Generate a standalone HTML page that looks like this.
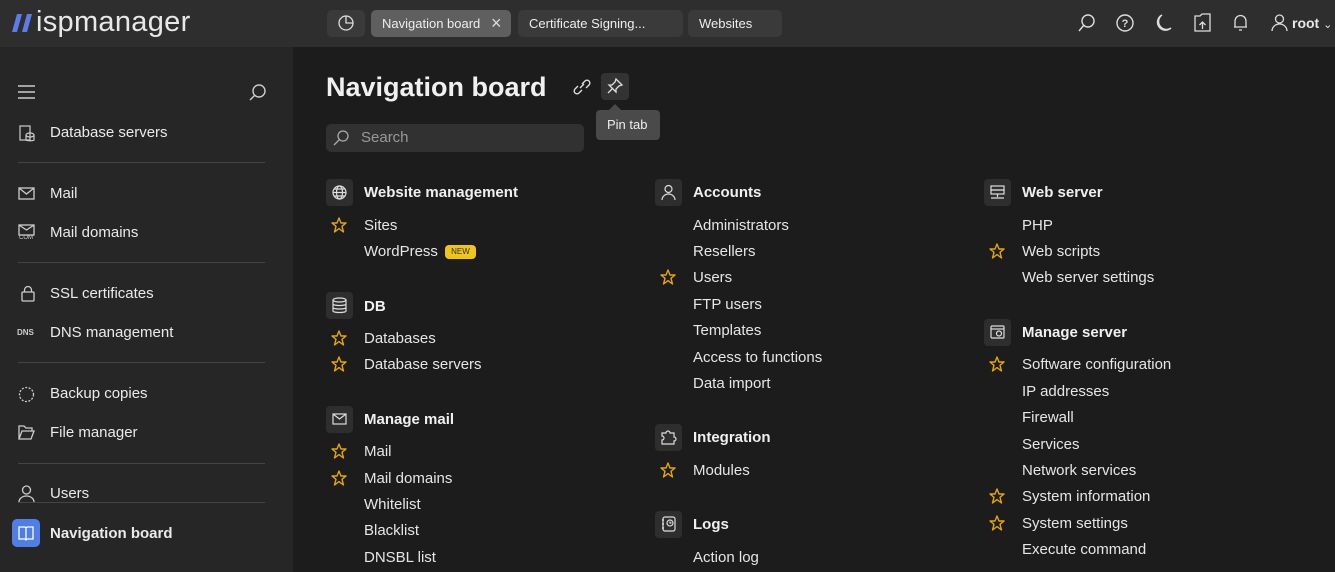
<!DOCTYPE html>
<html><head><meta charset="utf-8"><style>
*{margin:0;padding:0;box-sizing:border-box}
body{width:1335px;height:572px;overflow:hidden;background:#1c1c1c;font-family:"Liberation Sans",sans-serif;color:#e8e8e8;position:relative}
.a{position:absolute;line-height:20px;white-space:nowrap}
.hdr{position:absolute;left:0;top:0;width:1335px;height:47px;background:#2e2e2e}
.side{position:absolute;left:0;top:47px;width:293px;height:525px;background:#262626}
.tab{position:absolute;top:10px;height:27px;border-radius:5px;background:#3a3a3a;font-size:13px;line-height:27px;padding-left:11px;color:#eee}
.si{font-size:15px;color:#eaeaea}
.hr{position:absolute;left:18px;width:247px;height:1px;background:#444}
.it{font-size:15px;color:#e6e6e6}
.h{font-size:15px;font-weight:bold;color:#f0f0f0}
.box{position:absolute;width:27px;height:27px;border-radius:4px;background:#2e2e2e}
svg{position:absolute;overflow:visible}
.st{fill:none;stroke:#e5a50a;stroke-width:1.4;stroke-linejoin:round}
</style></head><body>
<div class="hdr"></div>
<svg style="left:12px;top:14px" width="22" height="18"><path d="M5 0H10L5 18H0ZM15 0H20L15 18H10Z" fill="#5b7de8"/></svg>
<div class="a" style="left:36px;top:6px;font-size:29px;line-height:32px;color:#e8e8e8;letter-spacing:0.3px">ispmanager</div>
<div class="tab" style="left:327px;width:38px;padding:0"></div>
<svg style="left:338px;top:15px" width="16" height="16"><circle cx="8" cy="8" r="7" fill="none" stroke="#ddd" stroke-width="1.3"/><path d="M8 1V8H15" fill="none" stroke="#ddd" stroke-width="1.3"/></svg>
<div class="tab" style="left:371px;width:140px;background:#5f5f5f">Navigation board</div>
<div class="a" style="left:491px;top:13px;font-size:18px;color:#ddd">×</div>
<div class="tab" style="left:518px;width:165px">Certificate Signing...</div>
<div class="tab" style="left:688px;width:94px">Websites</div>
<svg style="left:1078px;top:14px" width="18" height="18" fill="none" stroke="#ddd" stroke-width="1.4"><circle cx="10" cy="7" r="6"/><path d="M6 11L1 17"/></svg>
<svg style="left:1116px;top:14px" width="18" height="18" fill="none" stroke="#ddd" stroke-width="1.4"><circle cx="9" cy="9" r="8"/><text x="9" y="13" font-size="11" font-weight="bold" fill="#ddd" stroke="none" text-anchor="middle" font-family="Liberation Sans">?</text></svg>
<svg style="left:1156px;top:14px" width="16" height="18" fill="none" stroke="#ddd" stroke-width="1.4"><path d="M6 1A8 8 0 1 0 15 14A7 7 0 0 1 6 1Z"/></svg>
<svg style="left:1194px;top:13px" width="17" height="19" fill="none" stroke="#ddd" stroke-width="1.3"><path d="M1 3H6L8 1H16V18H1Z"/><path d="M8.5 16V9M5.5 12L8.5 9L11.5 12"/></svg>
<svg style="left:1233px;top:13px" width="15" height="19" fill="none" stroke="#ddd" stroke-width="1.3"><path d="M2 14V8A5.5 5.5 0 0 1 13 8V14H2ZM1 14H14M6 17H9"/></svg>
<svg style="left:1271px;top:13px" width="17" height="19" fill="none" stroke="#ddd" stroke-width="1.3"><circle cx="8.5" cy="6" r="4"/><path d="M1 18A7.5 7 0 0 1 16 18"/></svg>
<div class="a" style="left:1292px;top:13px;font-size:14px;font-weight:bold">root <span style="font-weight:normal;font-size:11px">⌄</span></div>

<div class="side"></div>
<svg style="left:18px;top:85px" width="17" height="14" stroke="#ccc" stroke-width="1.4"><path d="M0 1H17M0 7H17M0 13H17"/></svg>
<svg style="left:249px;top:84px" width="17" height="17" fill="none" stroke="#ccc" stroke-width="1.4"><circle cx="10" cy="7" r="6"/><path d="M6 11L1 16"/></svg>
<svg style="left:19px;top:125px" width="16" height="17" fill="none" stroke="#ccc" stroke-width="1.2"><rect x="1" y="1" width="10" height="14"/><ellipse cx="11" cy="10" rx="4" ry="2"/><path d="M7 10V15C7 16 15 16 15 15V10"/></svg>
<div class="a si" style="left:50px;top:123px">Database servers</div>
<div class="hr" style="top:162px"></div>
<svg style="left:18px;top:187px" width="17" height="13" fill="none" stroke="#ccc" stroke-width="1.3"><rect x="1" y="1" width="15" height="11"/><path d="M1 1L8.5 7L16 1"/></svg>
<div class="a si" style="left:50px;top:184px">Mail</div>
<svg style="left:18px;top:224px" width="17" height="17" fill="none" stroke="#ccc" stroke-width="1.3"><rect x="1" y="1" width="15" height="10"/><path d="M1 1L8.5 6L16 1"/></svg>
<div class="a" style="left:19px;top:235px;font-size:6px;line-height:6px;color:#ccc">COM</div>
<div class="a si" style="left:50px;top:223px">Mail domains</div>
<div class="hr" style="top:262px"></div>
<svg style="left:21px;top:285px" width="14" height="17" fill="none" stroke="#ccc" stroke-width="1.3"><rect x="1" y="7" width="12" height="9" rx="1"/><path d="M3.5 7V5A3.5 3.5 0 0 1 10.5 5V7"/></svg>
<div class="a si" style="left:50px;top:284px">SSL certificates</div>
<div class="a" style="left:17px;top:325px;font-size:8px;line-height:16px;color:#ccc;font-weight:bold">DNS</div>
<div class="a si" style="left:50px;top:323px">DNS management</div>
<div class="hr" style="top:362px"></div>
<svg style="left:18px;top:386px" width="17" height="17" fill="none" stroke="#ccc" stroke-width="1.3" stroke-dasharray="2 1.5"><circle cx="8.5" cy="8.5" r="7"/></svg>
<div class="a si" style="left:50px;top:384px">Backup copies</div>
<svg style="left:18px;top:425px" width="17" height="15" fill="none" stroke="#ccc" stroke-width="1.3"><path d="M1 14V1H6L8 3H14V6M1 14L4 6H16L13 14Z"/></svg>
<div class="a si" style="left:50px;top:423px">File manager</div>
<div class="hr" style="top:463px"></div>
<svg style="left:18px;top:485px" width="17" height="18" fill="none" stroke="#ccc" stroke-width="1.3"><circle cx="8.5" cy="5" r="4"/><path d="M1 17A7.5 6 0 0 1 16 17"/></svg>
<div class="a si" style="left:50px;top:484px">Users</div>
<div class="hr" style="top:502px"></div>
<div style="position:absolute;left:12px;top:519px;width:28px;height:28px;border-radius:5px;background:#4f7fe6"></div>
<svg style="left:18px;top:526px" width="16" height="14" fill="none" stroke="#fff" stroke-width="1.3"><path d="M1 1H7L8 2L9 1H15V13H9L8 14L7 13H1ZM8 2V14"/></svg>
<div class="a si" style="left:50px;top:524px;font-weight:bold">Navigation board</div>

<div class="a" style="left:326px;top:70px;font-size:27px;line-height:34px;font-weight:bold;color:#f0f0f0">Navigation board</div>
<svg style="left:573px;top:79px" width="18" height="16" fill="none" stroke="#ddd" stroke-width="1.4"><path d="M7 9L11 5M5 7L2 10A2.5 2.5 0 0 0 6 14L9 11M9 5L12 2A2.5 2.5 0 0 1 16 6L13 9"/></svg>
<div class="box" style="left:601px;top:73px;width:28px;height:27px;background:#333"></div>
<svg style="left:607px;top:78px" width="16" height="16" fill="none" stroke="#ddd" stroke-width="1.3"><path d="M9 1L15 7L12 8L9 11L9 14L2 7L5 7L8 4ZM5 11L1 15"/></svg>
<div style="position:absolute;left:596px;top:110px;width:64px;height:30px;background:#4a4a4a;border-radius:4px"></div>
<div style="position:absolute;left:609px;top:104px;width:0;height:0;border-left:6px solid transparent;border-right:6px solid transparent;border-bottom:6px solid #4a4a4a"></div>
<div class="a" style="left:607px;top:115px;font-size:13px;color:#eee">Pin tab</div>
<div style="position:absolute;left:326px;top:124px;width:258px;height:28px;background:#313131;border-radius:5px"></div>
<svg style="left:333px;top:130px" width="16" height="16" fill="none" stroke="#aaa" stroke-width="1.3"><circle cx="10" cy="6" r="5"/><path d="M6.5 9.5L1 15"/></svg>
<div class="a" style="left:361px;top:128px;font-size:15px;color:#999">Search</div>

<div class="box" style="left:326px;top:179px"></div>
<svg style="left:332px;top:185px" width="15" height="15" fill="none" stroke="#ddd" stroke-width="1.2"><circle cx="7.5" cy="7.5" r="6.5"/><ellipse cx="7.5" cy="7.5" rx="3" ry="6.5"/><path d="M1 7.5H14M2 4H13M2 11H13"/></svg>
<div class="a h" style="left:364px;top:183px">Website management</div>
<div class="a it" style="left:364px;top:216px">Sites</div>
<div class="a it" style="left:364px;top:242px">WordPress</div>
<div class="a" style="left:445px;top:245px;width:31px;height:14px;background:#f0c419;border-radius:4px;font-size:8px;line-height:14px;text-align:center;color:#333">NEW</div>
<div class="box" style="left:326px;top:292px"></div>
<svg style="left:332px;top:297px" width="15" height="17" fill="none" stroke="#ddd" stroke-width="1.2"><ellipse cx="7.5" cy="3" rx="6.5" ry="2"/><path d="M1 3V14C1 16 14 16 14 14V3M1 7C1 9 14 9 14 7M1 10.5C1 12.5 14 12.5 14 10.5"/></svg>
<div class="a h" style="left:364px;top:297px">DB</div>
<div class="a it" style="left:364px;top:329px">Databases</div>
<div class="a it" style="left:364px;top:355px">Database servers</div>
<div class="box" style="left:326px;top:406px"></div>
<svg style="left:332px;top:413px" width="15" height="12" fill="none" stroke="#ddd" stroke-width="1.2"><rect x="1" y="1" width="13" height="10"/><path d="M1 1L7.5 6L14 1"/></svg>
<div class="a h" style="left:364px;top:410px">Manage mail</div>
<div class="a it" style="left:364px;top:442px">Mail</div>
<div class="a it" style="left:364px;top:469px">Mail domains</div>
<div class="a it" style="left:364px;top:495px">Whitelist</div>
<div class="a it" style="left:364px;top:521px">Blacklist</div>
<div class="a it" style="left:364px;top:548px">DNSBL list</div>

<div class="box" style="left:655px;top:179px"></div>
<svg style="left:661px;top:184px" width="15" height="17" fill="none" stroke="#ddd" stroke-width="1.2"><circle cx="7.5" cy="5" r="3.5"/><path d="M1 16A6.5 6 0 0 1 14 16"/></svg>
<div class="a h" style="left:693px;top:183px">Accounts</div>
<div class="a it" style="left:693px;top:216px">Administrators</div>
<div class="a it" style="left:693px;top:242px">Resellers</div>
<div class="a it" style="left:693px;top:268px">Users</div>
<div class="a it" style="left:693px;top:295px">FTP users</div>
<div class="a it" style="left:693px;top:321px">Templates</div>
<div class="a it" style="left:693px;top:348px">Access to functions</div>
<div class="a it" style="left:693px;top:374px">Data import</div>
<div class="box" style="left:655px;top:424px"></div>
<svg style="left:661px;top:430px" width="15" height="15" fill="none" stroke="#ddd" stroke-width="1.2"><path d="M1 3H5A2 2 0 0 1 9 3H13V7A2 2 0 0 1 13 11V14H1V10A2 2 0 0 0 1 6Z"/></svg>
<div class="a h" style="left:693px;top:428px">Integration</div>
<div class="a it" style="left:693px;top:461px">Modules</div>
<div class="box" style="left:655px;top:511px"></div>
<svg style="left:661px;top:516px" width="15" height="16" fill="none" stroke="#ddd" stroke-width="1.2"><rect x="2" y="1" width="12" height="14" rx="2"/><circle cx="9" cy="7" r="3"/><path d="M9 5.5V7H10.5M1 4H3M1 8H3M1 12H3"/></svg>
<div class="a h" style="left:693px;top:515px">Logs</div>
<div class="a it" style="left:693px;top:548px">Action log</div>

<div class="box" style="left:984px;top:179px"></div>
<svg style="left:990px;top:185px" width="15" height="15" fill="none" stroke="#ddd" stroke-width="1.2"><rect x="1" y="1" width="13" height="4"/><rect x="1" y="5" width="13" height="4"/><path d="M7.5 9V12M1 13H14"/></svg>
<div class="a h" style="left:1022px;top:183px">Web server</div>
<div class="a it" style="left:1022px;top:216px">PHP</div>
<div class="a it" style="left:1022px;top:242px">Web scripts</div>
<div class="a it" style="left:1022px;top:268px">Web server settings</div>
<div class="box" style="left:984px;top:319px"></div>
<svg style="left:990px;top:325px" width="15" height="15" fill="none" stroke="#ddd" stroke-width="1.2"><rect x="1" y="1" width="13" height="12" rx="1"/><circle cx="9" cy="8.5" r="2.5"/><path d="M1 4H14"/></svg>
<div class="a h" style="left:1022px;top:323px">Manage server</div>
<div class="a it" style="left:1022px;top:355px">Software configuration</div>
<div class="a it" style="left:1022px;top:382px">IP addresses</div>
<div class="a it" style="left:1022px;top:408px">Firewall</div>
<div class="a it" style="left:1022px;top:435px">Services</div>
<div class="a it" style="left:1022px;top:461px">Network services</div>
<div class="a it" style="left:1022px;top:487px">System information</div>
<div class="a it" style="left:1022px;top:514px">System settings</div>
<div class="a it" style="left:1022px;top:540px">Execute command</div>

<svg width="0" height="0"><defs><path id="s" d="M8 1L10 6H15L11 9.3L12.5 15L8 11.6L3.5 15L5 9.3L1 6H6Z"/></defs></svg>
<svg style="left:331px;top:217px" width="16" height="16"><use href="#s" class="st"/></svg>
<svg style="left:331px;top:330px" width="16" height="16"><use href="#s" class="st"/></svg>
<svg style="left:331px;top:356px" width="16" height="16"><use href="#s" class="st"/></svg>
<svg style="left:331px;top:443px" width="16" height="16"><use href="#s" class="st"/></svg>
<svg style="left:331px;top:470px" width="16" height="16"><use href="#s" class="st"/></svg>
<svg style="left:660px;top:269px" width="16" height="16"><use href="#s" class="st"/></svg>
<svg style="left:660px;top:462px" width="16" height="16"><use href="#s" class="st"/></svg>
<svg style="left:989px;top:243px" width="16" height="16"><use href="#s" class="st"/></svg>
<svg style="left:989px;top:356px" width="16" height="16"><use href="#s" class="st"/></svg>
<svg style="left:989px;top:488px" width="16" height="16"><use href="#s" class="st"/></svg>
<svg style="left:989px;top:515px" width="16" height="16"><use href="#s" class="st"/></svg>
</body></html>
